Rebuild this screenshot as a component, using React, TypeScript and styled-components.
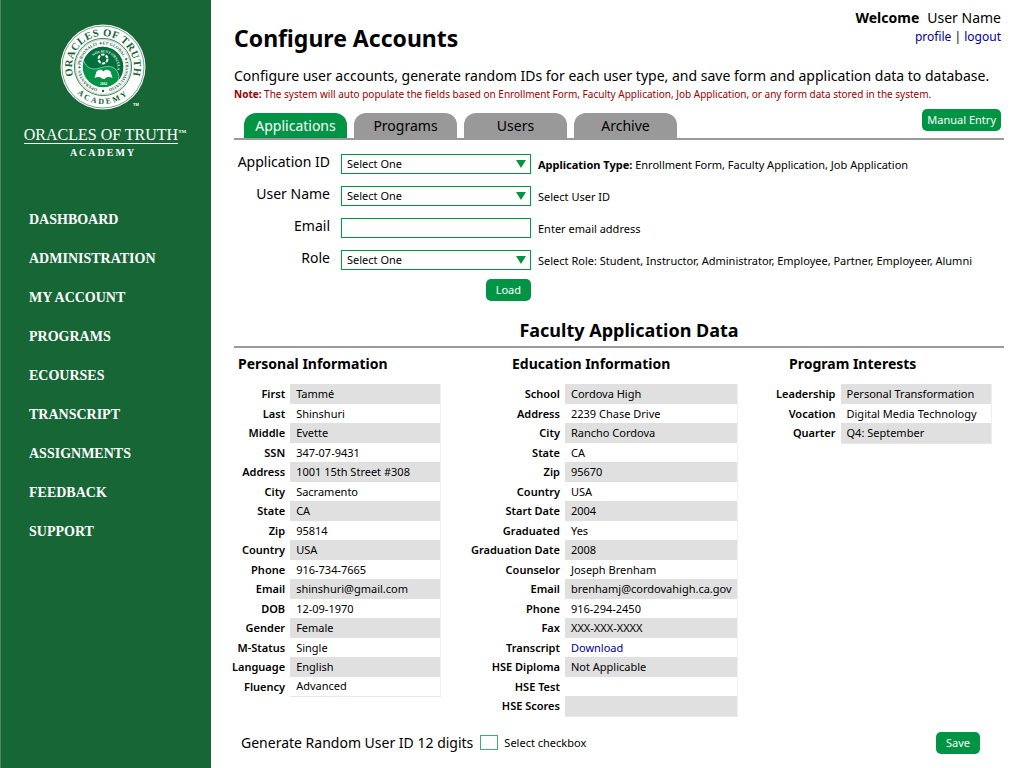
import React from "react";
import styled, { createGlobalStyle } from "styled-components";

const GREEN = "#009444";
const FOREST = "#166636";
const RULE = "#999999";
const LINK = "#000099";

const GlobalStyle = createGlobalStyle`
  * { box-sizing: border-box; }
  body {
    margin: 0;
    background: #fff;
    color: #000;
    font-family: "Noto Sans", "Open Sans", sans-serif;
    font-size: 11px;
  }
  h1, h2, h3, p { margin: 0; }
  button, input, select { font: inherit; color: inherit; margin: 0; }
`;

const Page = styled.div`
  display: flex;
  min-height: 100vh;
`;

const Sidebar = styled.aside`
  flex: none;
  width: 211px;
  background: ${FOREST};
  border-left: 1px solid #4a8a64;
  color: #fff;
  font-family: "Liberation Serif", serif;
`;

const Brand = styled.div`
  display: flex;
  flex-direction: column;
  align-items: center;
  padding-top: 22px;
`;

const Seal = styled.svg`
  display: block;
  width: 90px;
  height: 90px;
  overflow: visible;
  margin-right: 6px;
`;

const BrandName = styled.div`
  display: flex;
  margin: 15px 0 0 -2px;
  font-size: 16px;
  line-height: 16px;
`;

const BrandWord = styled.span`
  border-bottom: 1px solid #fff;
`;

const Trade = styled.span`
  font-size: 5px;
  font-weight: 700;
  line-height: 9px;
`;

const BrandSub = styled.div`
  margin: 3px 6px 0 0;
  font-size: 10px;
  font-weight: 700;
  line-height: 12px;
  letter-spacing: 2px;
`;

const Nav = styled.nav`
  display: flex;
  flex-direction: column;
  gap: 19px;
  padding: 51px 0 0 28px;
`;

const NavLink = styled.a`
  color: #fff;
  font-size: 14px;
  font-weight: 700;
  line-height: 20px;
  text-decoration: none;
`;

const Main = styled.main`
  flex: 1;
  min-width: 0;
  padding: 8px 20px 12px 23px;
`;

const Header = styled.header`
  display: flex;
  justify-content: space-between;
  align-items: flex-start;
  padding-right: 3px;
`;

const Title = styled.h1`
  padding-top: 14px;
  font-size: 23px;
  line-height: 32px;
`;

const Account = styled.div`
  text-align: right;
  font-size: 12px;
  line-height: 18px;
`;

const Welcome = styled.p`
  font-size: 14px;
  line-height: 20px;
  strong { margin-right: 8px; }
`;

const TextLink = styled.a`
  color: ${LINK};
  text-decoration: none;
`;

const Intro = styled.p`
  margin-top: 12px;
  font-size: 14px;
  line-height: 20px;
`;

const Note = styled.p`
  color: #990000;
  font-size: 10px;
  line-height: 16px;
`;

const TabBar = styled.div`
  display: flex;
  align-items: flex-end;
  justify-content: space-between;
  height: 38px;
  padding: 0 3px 0 10px;
  border-bottom: 2px solid ${RULE};
`;

const Tabs = styled.div`
  display: flex;
  gap: 7px;
`;

const Tab = styled.button<{ $active?: boolean }>`
  width: 103px;
  height: 25px;
  padding: 0;
  border: 0;
  border-radius: 12px 12px 0 0;
  background: ${(p) => (p.$active ? GREEN : RULE)};
  color: ${(p) => (p.$active ? "#fff" : "#000")};
  font-size: 14px;
  line-height: 20px;
`;

const Button = styled.button<{ $tight?: boolean }>`
  height: 22px;
  padding: 0 ${(p) => (p.$tight ? 5 : 10)}px;
  border: 0;
  border-radius: 5px;
  background: ${GREEN};
  color: #fff;
  font-size: 11px;
  line-height: 16px;
`;

const ManualSlot = styled.div`
  align-self: flex-start;
  padding-top: 7px;
`;

const Form = styled.form`
  display: flex;
  flex-direction: column;
  gap: 12px;
  padding-top: 14px;
`;

const Field = styled.div`
  display: grid;
  grid-template-columns: 96px 190px 1fr;
  align-items: center;
  height: 20px;
`;

const FieldLabel = styled.label`
  align-self: start;
  font-size: 14px;
  line-height: 16px;
  text-align: right;
`;

const ControlBox = styled.div`
  position: relative;
  margin-left: 11px;
  margin-right: -11px;
`;

const Select = styled.select`
  display: block;
  appearance: none;
  width: 100%;
  height: 20px;
  padding: 0 5px;
  border: 1px solid ${GREEN};
  border-radius: 0;
  background: #fff;
  font-size: 11px;
  line-height: 16px;
`;

const Arrow = styled.svg`
  position: absolute;
  top: 6px;
  right: 5px;
  width: 10px;
  height: 8px;
  fill: ${GREEN};
  pointer-events: none;
`;

const TextInput = styled.input`
  display: block;
  width: 100%;
  height: 20px;
  padding: 0 5px;
  border: 1px solid ${GREEN};
  border-radius: 0;
  background: #fff;
`;

const Hint = styled.p`
  padding: 2px 0 0 18px;
  line-height: 18px;
  white-space: nowrap;
`;

const LoadRow = styled.div`
  display: flex;
  justify-content: flex-end;
  width: 297px;
  margin-top: -3px;
`;

const DataTitle = styled.h2`
  margin-top: 17px;
  padding: 0 0 4px 20px;
  border-bottom: 2px solid ${RULE};
  font-size: 18px;
  line-height: 24px;
  text-align: center;
`;

const DataColumns = styled.div`
  display: grid;
  grid-template-columns: 209fr 267fr 224fr;
  gap: 30px;
  margin-left: -2px;
  padding-right: 12px;
`;

const GroupTitle = styled.h3<{ $indent: number }>`
  padding: 6px 0 10px ${(p) => p.$indent}px;
  font-size: 14px;
  line-height: 20px;
`;

const DataTable = styled.table`
  width: 100%;
  border-collapse: collapse;
  line-height: 18px;
  tr { height: 19px; }
  tr:nth-child(odd) { height: 20px; }
  tr:nth-child(odd) td { background: #e0e0e0; }
  tr:last-child td { border-bottom: 1px solid #e8e8e8; }
`;

const RowLabel = styled.th`
  padding: 0 5px 0 0;
  font-weight: 600;
  text-align: right;
  white-space: nowrap;
`;

const RowValue = styled.td<{ $width: number }>`
  width: ${(p) => p.$width}px;
  padding: 0 0 0 6px;
  border-right: 1px solid #f0f0f0;
  white-space: nowrap;
`;

const Footer = styled.footer`
  display: flex;
  align-items: center;
  justify-content: space-between;
  margin-top: 15px;
  padding: 0 24px 0 7px;
`;

const Generate = styled.div`
  display: flex;
  align-items: center;
`;

const GenerateText = styled.span`
  margin-right: 7px;
  font-size: 14px;
  line-height: 20px;
`;

const CheckLabel = styled.label`
  display: flex;
  align-items: center;
  gap: 6px;
  line-height: 16px;
`;

const Checkbox = styled.input`
  appearance: none;
  width: 18px;
  height: 15px;
  border: 1px solid #40af73;
  background: #fff;
  &:checked { background: ${GREEN}; }
`;

const NAV = [
  "DASHBOARD",
  "ADMINISTRATION",
  "MY ACCOUNT",
  "PROGRAMS",
  "ECOURSES",
  "TRANSCRIPT",
  "ASSIGNMENTS",
  "FEEDBACK",
  "SUPPORT",
];

type Row = [string, React.ReactNode];

const PERSONAL: Row[] = [
  ["First", "Tammé"],
  ["Last", "Shinshuri"],
  ["Middle", "Evette"],
  ["SSN", "347-07-9431"],
  ["Address", "1001 15th Street #308"],
  ["City", "Sacramento"],
  ["State", "CA"],
  ["Zip", "95814"],
  ["Country", "USA"],
  ["Phone", "916-734-7665"],
  ["Email", "shinshuri@gmail.com"],
  ["DOB", "12-09-1970"],
  ["Gender", "Female"],
  ["M-Status", "Single"],
  ["Language", "English"],
  ["Fluency", "Advanced"],
];

const EDUCATION: Row[] = [
  ["School", "Cordova High"],
  ["Address", "2239 Chase Drive"],
  ["City", "Rancho Cordova"],
  ["State", "CA"],
  ["Zip", "95670"],
  ["Country", "USA"],
  ["Start Date", "2004"],
  ["Graduated", "Yes"],
  ["Graduation Date", "2008"],
  ["Counselor", "Joseph Brenham"],
  ["Email", "brenhamj@cordovahigh.ca.gov"],
  ["Phone", "916-294-2450"],
  ["Fax", "XXX-XXX-XXXX"],
  ["Transcript", <TextLink href="#transcript">Download</TextLink>],
  ["HSE Diploma", "Not Applicable"],
  ["HSE Test", ""],
  ["HSE Scores", ""],
];

const INTERESTS: Row[] = [
  ["Leadership", "Personal Transformation"],
  ["Vocation", "Digital Media Technology"],
  ["Quarter", "Q4: September"],
];

function SealLogo() {
  return (
    <Seal viewBox="-45 -45 90 90" role="img" aria-label="Oracles of Truth Academy seal">
      <defs>
        <path id="outerTop" d="M0 31 A31 31 0 0 1 0 -31 A31 31 0 0 1 0 31" />
        <path id="outerBottom" d="M-37 0 A37 37 0 0 0 37 0" />
        <path id="innerRing" d="M0 22.5 A22.5 22.5 0 0 1 0 -22.5 A22.5 22.5 0 0 1 0 22.5" />
        <path id="motto" d="M0 14.5 A14.5 14.5 0 0 1 0 -14.5 A14.5 14.5 0 0 1 0 14.5" transform="rotate(30)" />
      </defs>
      <circle r="42.5" fill="#fff" />
      <circle r="41" fill="none" stroke={FOREST} strokeWidth="0.6" />
      <circle r="28.6" fill="none" stroke={FOREST} strokeWidth="0.8" />
      <circle r="27.4" fill="none" stroke={FOREST} strokeWidth="0.3" />
      <circle r="20.3" fill={GREEN} />
      <path
        d="M-19.4 -6 A20.3 20.3 0 1 1 14.4 14.4 C17 11 16 5 11 1 C6 -2 1 0 -5 1.5 C-11 3 -16 1 -19.4 -6 Z"
        fill="#00703c"
      />
      <path
        d="M-19.4 -6 C-16 1 -11 3 -5 1.5 C1 0 6 -2 11 1 C16 5 17 11 14.4 14.4"
        fill="none"
        stroke="#fff"
        strokeWidth="0.5"
      />
      <circle cy="-8" r="4.5" fill="none" stroke="#fff" strokeWidth="2" strokeDasharray="3.4 1.3" />
      <path d="M0 -11 L2.6 -6.5 H-2.6 Z M0 -5 L2.6 -9.5 H-2.6 Z" fill={FOREST} />
      <path
        d="M-8.5 11 L-6.5 4.5 C-4 2 -1 2.5 0.5 4.500 C2 2.5 5 2 7.500 4.500 L9.5 11 C7 9.500 3.500 9.500 1.500 12 H-0.5 C-2.500 9.500 -6 9.500 -8.500 11 Z"
        fill="#fff"
      />
      <g fill={FOREST} fontFamily="Liberation Serif, serif" fontWeight="700" textAnchor="middle">
        <text fontSize="10.500" letterSpacing="0.5">
          <textPath href="#outerTop" startOffset="50%">ORACLES OF TRUTH</textPath>
        </text>
        <text fontSize="8" letterSpacing="2.200">
          <textPath href="#outerBottom" startOffset="50%">ACADEMY</textPath>
        </text>
        <text fontSize="4.300">
          <textPath href="#innerRing" startOffset="50%">
            OPERANTES ✦ PERSONALIS ✦ ET GLOBAL ✦ TRANSMUTATIO
          </textPath>
        </text>
        <circle cy="24" r="1.2" />
      </g>
      <g fill="#fff" fontFamily="Liberation Serif, serif" fontWeight="700" textAnchor="middle">
        <text fontSize="3.500">
          <textPath href="#motto" startOffset="50%">NOS SUNT ORACULA</textPath>
        </text>
        <text x="0.5" y="17.500" fontSize="3.500">2004</text>
        <text x="33" y="39" fontSize="4" fontFamily="Liberation Sans, sans-serif">TM</text>
      </g>
    </Seal>
  );
}

function SelectBox({ id }: { id: string }) {
  return (
    <ControlBox>
      <Select id={id} defaultValue="">
        <option value="">Select One</option>
      </Select>
      <Arrow viewBox="0 0 10 8" aria-hidden="true">
        <path d="M0 0 H10 L5 8 Z" />
      </Arrow>
    </ControlBox>
  );
}

function DataGroup({ title, indent, valueWidth, rows }: {
  title: string;
  indent: number;
  valueWidth: number;
  rows: Row[];
}) {
  return (
    <section>
      <GroupTitle $indent={indent}>{title}</GroupTitle>
      <DataTable aria-label={title}>
        <tbody>
          {rows.map(([label, value]) => (
            <tr key={label}>
              <RowLabel scope="row">{label}</RowLabel>
              <RowValue $width={valueWidth}>{value}</RowValue>
            </tr>
          ))}
        </tbody>
      </DataTable>
    </section>
  );
}

export default function App() {
  return (
    <>
      <GlobalStyle />
      <Page>
        <Sidebar>
          <Brand>
            <SealLogo />
            <BrandName>
              <BrandWord>ORACLES OF TRUTH</BrandWord>
              <Trade>TM</Trade>
            </BrandName>
            <BrandSub>ACADEMY</BrandSub>
          </Brand>
          <Nav>
            {NAV.map((item) => (
              <NavLink key={item} href={"#" + item.toLowerCase().replace(" ", "-")}>{item}</NavLink>
            ))}
          </Nav>
        </Sidebar>
        <Main>
          <Header>
            <Title>Configure Accounts</Title>
            <Account>
              <Welcome><strong>Welcome</strong>User Name</Welcome>
              <TextLink href="#profile">profile</TextLink> | <TextLink href="#logout">logout</TextLink>
            </Account>
          </Header>
          <Intro>
            Configure user accounts, generate random IDs for each user type, and save form and application data to database.
          </Intro>
          <Note>
            <strong>Note:</strong> The system will auto populate the fields based on Enrollment Form, Faculty Application, Job Application, or any form data stored in the system.
          </Note>
          <TabBar>
            <Tabs>
              <Tab type="button" $active>Applications</Tab>
              <Tab type="button">Programs</Tab>
              <Tab type="button">Users</Tab>
              <Tab type="button">Archive</Tab>
            </Tabs>
            <ManualSlot>
              <Button type="button" $tight>Manual Entry</Button>
            </ManualSlot>
          </TabBar>
          <Form onSubmit={(e) => e.preventDefault()}>
            <Field>
              <FieldLabel htmlFor="application">Application ID</FieldLabel>
              <SelectBox id="application" />
              <Hint><strong>Application Type:</strong> Enrollment Form, Faculty Application, Job Application</Hint>
            </Field>
            <Field>
              <FieldLabel htmlFor="user">User Name</FieldLabel>
              <SelectBox id="user" />
              <Hint>Select User ID</Hint>
            </Field>
            <Field>
              <FieldLabel htmlFor="email">Email</FieldLabel>
              <ControlBox><TextInput id="email" type="email" /></ControlBox>
              <Hint>Enter email address</Hint>
            </Field>
            <Field>
              <FieldLabel htmlFor="role">Role</FieldLabel>
              <SelectBox id="role" />
              <Hint>Select Role: Student, Instructor, Administrator, Employee, Partner, Employeer, Alumni</Hint>
            </Field>
            <LoadRow>
              <Button type="submit">Load</Button>
            </LoadRow>
          </Form>
          <DataTitle>Faculty Application Data</DataTitle>
          <DataColumns>
            <DataGroup title="Personal Information" indent={6} valueWidth={151} rows={PERSONAL} />
            <DataGroup title="Education Information" indent={41} valueWidth={174} rows={EDUCATION} />
            <DataGroup title="Program Interests" indent={21} valueWidth={151} rows={INTERESTS} />
          </DataColumns>
          <Footer>
            <Generate>
              <GenerateText>Generate Random User ID 12 digits</GenerateText>
              <CheckLabel>
                <Checkbox type="checkbox" />
                Select checkbox
              </CheckLabel>
            </Generate>
            <Button type="button">Save</Button>
          </Footer>
        </Main>
      </Page>
    </>
  );
}
